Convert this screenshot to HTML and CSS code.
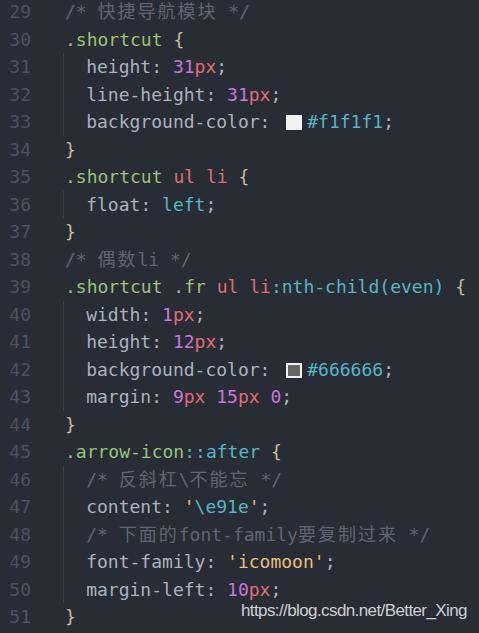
FILE: index.html
```html
<!DOCTYPE html>
<html lang="zh">
<head>
<meta charset="utf-8">
<link rel="stylesheet" href="styles.css">
</head>
<body>
<div class="editor">
  <div class="line"><span class="ln">29</span><span class="code"><span class="cm">/* <span class="cjk">快捷导航模块</span> */</span></span></div>
  <div class="line"><span class="ln">30</span><span class="code"><span class="sel">.shortcut</span> <span class="br">{</span></span></div>
  <div class="line"><span class="ln">31</span><span class="code"><span class="ind"></span><span class="pr">height</span><span class="pu">: </span><span class="num">31</span><span class="unit">px</span><span class="pu">;</span></span></div>
  <div class="line"><span class="ln">32</span><span class="code"><span class="ind"></span><span class="pr">line-height</span><span class="pu">: </span><span class="num">31</span><span class="unit">px</span><span class="pu">;</span></span></div>
  <div class="line"><span class="ln">33</span><span class="code"><span class="ind"></span><span class="pr">background-color</span><span class="pu">: </span><span class="sw sw-light"></span><span class="val">#f1f1f1</span><span class="pu">;</span></span></div>
  <div class="line"><span class="ln">34</span><span class="code"><span class="br">}</span></span></div>
  <div class="line"><span class="ln">35</span><span class="code"><span class="sel">.shortcut</span> <span class="tag">ul li</span> <span class="br">{</span></span></div>
  <div class="line"><span class="ln">36</span><span class="code"><span class="ind"></span><span class="pr">float</span><span class="pu">: </span><span class="val">left</span><span class="pu">;</span></span></div>
  <div class="line"><span class="ln">37</span><span class="code"><span class="br">}</span></span></div>
  <div class="line"><span class="ln">38</span><span class="code"><span class="cm">/* <span class="cjk">偶数</span>li */</span></span></div>
  <div class="line"><span class="ln">39</span><span class="code"><span class="sel">.shortcut .fr</span> <span class="tag">ul li</span><span class="val">:nth-child(even)</span> <span class="br">{</span></span></div>
  <div class="line"><span class="ln">40</span><span class="code"><span class="ind"></span><span class="pr">width</span><span class="pu">: </span><span class="num">1</span><span class="unit">px</span><span class="pu">;</span></span></div>
  <div class="line"><span class="ln">41</span><span class="code"><span class="ind"></span><span class="pr">height</span><span class="pu">: </span><span class="num">12</span><span class="unit">px</span><span class="pu">;</span></span></div>
  <div class="line"><span class="ln">42</span><span class="code"><span class="ind"></span><span class="pr">background-color</span><span class="pu">: </span><span class="sw sw-dark"></span><span class="val">#666666</span><span class="pu">;</span></span></div>
  <div class="line"><span class="ln">43</span><span class="code"><span class="ind"></span><span class="pr">margin</span><span class="pu">: </span><span class="num">9</span><span class="unit">px</span> <span class="num">15</span><span class="unit">px</span> <span class="num">0</span><span class="pu">;</span></span></div>
  <div class="line"><span class="ln">44</span><span class="code"><span class="br">}</span></span></div>
  <div class="line"><span class="ln">45</span><span class="code"><span class="sel">.arrow-icon</span><span class="val">::after</span> <span class="br">{</span></span></div>
  <div class="line"><span class="ln">46</span><span class="code"><span class="ind"></span><span class="cm">/* <span class="cjk">反斜杠</span>\<span class="cjk">不能忘</span> */</span></span></div>
  <div class="line"><span class="ln">47</span><span class="code"><span class="ind"></span><span class="pr">content</span><span class="pu">: </span><span class="str">'</span><span class="val">\e91e</span><span class="str">'</span><span class="pu">;</span></span></div>
  <div class="line"><span class="ln">48</span><span class="code"><span class="ind"></span><span class="cm">/* <span class="cjk">下面的</span>font-family<span class="cjk">要复制过来</span> */</span></span></div>
  <div class="line"><span class="ln">49</span><span class="code"><span class="ind"></span><span class="pr">font-family</span><span class="pu">: </span><span class="str">'icomoon'</span><span class="pu">;</span></span></div>
  <div class="line"><span class="ln">50</span><span class="code"><span class="ind"></span><span class="pr">margin-left</span><span class="pu">: </span><span class="num">10</span><span class="unit">px</span><span class="pu">;</span></span></div>
  <div class="line"><span class="ln">51</span><span class="code"><span class="br">}</span></span></div>
</div>
<div class="watermark">https://blog.csdn.net/Better_Xing</div>
</body>
</html>
```
FILE: styles.css
```css
html, body {
  margin: 0;
  padding: 0;
  background: #282c34;
  height: 100%;
  overflow: hidden;
}
body {
  position: relative;
}
.editor {
  margin-top: -2px;
  font-family: "DejaVu Sans Mono", "Noto Sans CJK SC", monospace;
  font-size: 18px;
  color: #abb2bf;
}
.line {
  display: flex;
  height: 27.5px;
  line-height: 27.5px;
  white-space: pre;
}
.ln {
  width: 31px;
  text-align: right;
  color: #4b5363;
  flex: none;
}
.code {
  padding-left: 34px;
}
.ind {
  display: inline-block;
  width: 21.2px;
  height: 27.5px;
  vertical-align: top;
  margin-left: -2px;
  padding-left: 1px;
  border-left: 1px solid #3b4049;
}
.cm { color: #5f6672; }
.cjk { letter-spacing: 2px; }
.sel { color: #98c379; }
.br { color: #c8bc9c; }
.pr { color: #abb2bf; }
.pu { color: #abb2bf; }
.num { color: #c678dd; }
.unit { color: #e06c75; }
.tag { color: #e06c75; }
.val { color: #56b6c2; }
.str { color: #e5c07b; }
.sw {
  display: inline-block;
  box-sizing: border-box;
  width: 16px;
  height: 15px;
  margin: 0 5px;
  vertical-align: -2px;
}
.sw-light {
  background: #f1f1f1;
}
.sw-dark {
  background: #666666;
  border: 2px solid #f1f1f1;
}
.watermark {
  position: absolute;
  left: 241px;
  top: 601px;
  font-family: "Liberation Sans", Arial, sans-serif;
  font-size: 17px;
  letter-spacing: -0.6px;
  color: #cfcfcf;
  white-space: nowrap;
}
```
